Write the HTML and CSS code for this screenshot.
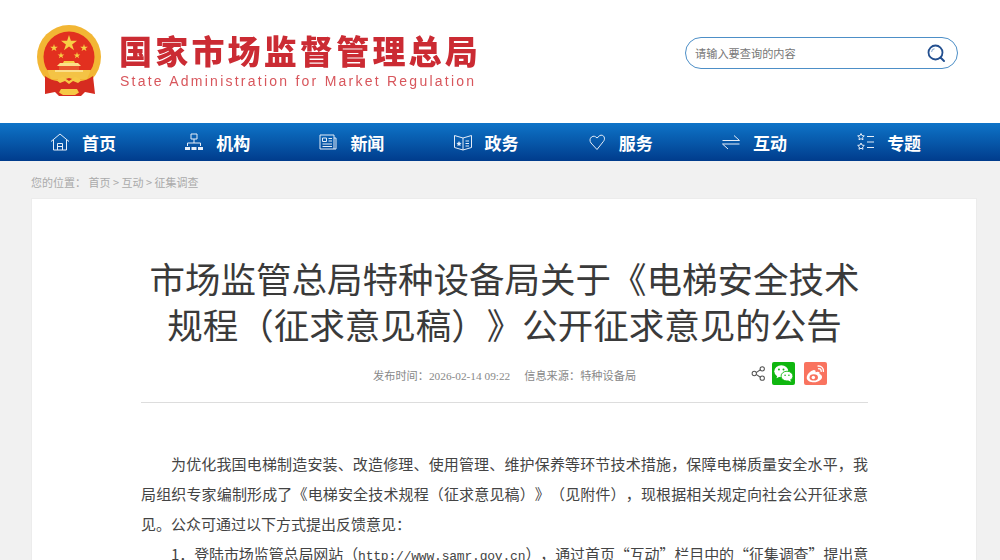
FILE: index.html
```html
<!DOCTYPE html>
<html lang="zh-CN">
<head>
<meta charset="utf-8">
<title>市场监管总局特种设备局关于《电梯安全技术规程（征求意见稿）》公开征求意见的公告</title>
<link rel="stylesheet" href="styles.css">
</head>
<body>
<header class="top">
  <a class="logo">
    <svg class="emblem" viewBox="0 0 70 72" width="70" height="72">
      <circle cx="35" cy="33" r="32" fill="#f2b634"/>
      <circle cx="35" cy="33" r="25.500" fill="#e2301f"/>
      <path d="M13 46h44l-4 9H17z" fill="#f4c345"/>
      <g fill="#f7cf45">
        <path d="M35 11l1.900 5.800h6.100l-4.900 3.600 1.900 5.800-5-3.600-5 3.600 1.900-5.800-4.900-3.600h6.100z"/>
        <path d="M20 20l.9 2.700h2.900l-2.300 1.700.9 2.700-2.400-1.700-2.400 1.700.9-2.700-2.300-1.700h2.900z"/>
        <path d="M50 20l.9 2.700h2.900l-2.300 1.700.9 2.700-2.400-1.700-2.400 1.700.9-2.700-2.300-1.700h2.900z"/>
        <path d="M27 28l.8 2.400h2.500l-2 1.500.8 2.400-2.100-1.500-2.100 1.500.8-2.400-2-1.500h2.500z"/>
        <path d="M43 28l.8 2.400h2.500l-2 1.500.8 2.400-2.100-1.500-2.100 1.500.8-2.400-2-1.500h2.500z"/>
        <path d="M30 37h10l1 2h-12z"/>
      </g>
      <path d="M26 39h18l3 3h-24z" fill="#fbe08a"/>
      <path d="M25 42h20v4H25z" fill="#e8572e"/>
      <path d="M21 46h28v2H21z" fill="#fbe08a"/>
      <path d="M11 52c4 3 9 5 14 5l10-3 10 3c5 0 10-2 14-5l2 18-10-2-4 4H25l-4-4-10 2z" fill="#d62b20"/>
      <path d="M22 56c3-1 5-3 7-3l6 4 6-4c2 0 4 2 7 3l-4 3-5-2-4 3-4-3-5 2z" fill="#f6c846"/>
      <path d="M27 65h16l2 3.500-4 2.500H29l-4-2.500z" fill="#f6c846"/>
    </svg>
    <div class="logo-text">
      <div class="logo-cn">国家市场监督管理总局</div>
      <div class="logo-en">State Administration for Market Regulation</div>
    </div>
  </a>
  <div class="search">
    <span class="search-hint">请输入要查询的内容</span>
    <svg class="search-icon" viewBox="0 0 20 20" width="20" height="20">
      <circle cx="9.500" cy="9.500" r="7" fill="none" stroke="#234f8f" stroke-width="1.800"/>
      <path d="M5.500 9a4 4 0 0 1 3-3.300" fill="none" stroke="#9cb8d8" stroke-width="1.200"/>
      <path d="M14.500 14.500l3.500 3.500" stroke="#234f8f" stroke-width="2" stroke-linecap="round"/>
    </svg>
  </div>
</header>

<nav class="nav">
  <a class="nav-item">
    <svg class="nav-icon" viewBox="0 0 20 20"><path d="M1 9.500 10 2l9 7.500M3.500 8v10h13V8M7.500 18v-6.500h5V18M7.500 14.500h5"/></svg>
    <span>首页</span>
  </a>
  <a class="nav-item">
    <svg class="nav-icon" viewBox="0 0 20 20"><path d="M7 2h6v5H7zM10 7v4M3.500 14v-3h13v3"/><path class="solid" d="M1 15h5v3H1zM7.500 15h5v3h-5zM14 15h5v3h-5z"/></svg>
    <span>机构</span>
  </a>
  <a class="nav-item">
    <svg class="nav-icon" viewBox="0 0 20 20"><path d="M2 3h14v14H2zM16 6h2v11h-2M4.500 6h4v3.500h-4zM10.500 6.500h3.500M10.500 9h3.500M4.500 12h9.500M4.500 14.500h9.500"/></svg>
    <span>新闻</span>
  </a>
  <a class="nav-item">
    <svg class="nav-icon" viewBox="0 0 20 20"><path d="M1.500 3.500 10 6l8.500-2.500v12L10 18l-8.500-2.500zM10 6v12M12.500 9h3.500M12.500 11.500h3.500M12.500 14h3.500"/><path class="solid" d="m6 9 .8 1.700 1.800.2-1.300 1.300.3 1.800L6 13.200 4.400 14l.3-1.800-1.300-1.300 1.800-.2z"/></svg>
    <span>政务</span>
  </a>
  <a class="nav-item">
    <svg class="nav-icon" viewBox="0 0 20 20"><path d="M10 17.500 4 11C2.500 9 2.700 6.500 4.500 5c1.800-1.300 3.800-1 5.500 1l2.800-2.500c1.700-.7 3.500-.3 4.300 1.400.7 1.700.4 3.100-.6 4.400z"/></svg>
    <span>服务</span>
  </a>
  <a class="nav-item">
    <svg class="nav-icon" viewBox="0 0 20 20"><path d="M1.500 8.500h17L13 3.500M18.500 12h-17L7 17"/></svg>
    <span>互动</span>
  </a>
  <a class="nav-item">
    <svg class="nav-icon" viewBox="0 0 20 20"><path d="m6 1.500 1 2.100 2.300.3-1.700 1.600.4 2.300-2-1.100-2 1.100.4-2.300-1.700-1.600L5 3.600zM6 11l1 2.100 2.300.3-1.700 1.600.4 2.300-2-1.100-2 1.100.4-2.300-1.700-1.600L5 13.100zM12 4.500h7M12 10h7M12 15.500h7"/></svg>
    <span>专题</span>
  </a>
</nav>

<main class="page">
  <div class="crumbs">您的位置： 首页 &gt; 互动 &gt; 征集调查</div>
  <article class="card">
    <h1 class="title">市场监管总局特种设备局关于《电梯安全技术规程（征求意见稿）》公开征求意见的公告</h1>
    <div class="meta">
      <div class="meta-text">
        <span>发布时间：<span class="latin">2026-02-14 09:22</span></span>
        <span>信息来源：特种设备局</span>
      </div>
      <div class="share">
        <svg class="share-icon" viewBox="0 0 16 16" width="15" height="15">
          <circle cx="3.500" cy="8" r="2.300"/><circle cx="12" cy="3" r="2.300"/><circle cx="12" cy="13" r="2.300"/>
          <path d="M5.500 7 10 4M5.500 9l4.500 3"/>
        </svg>
        <span class="badge wechat">
          <svg viewBox="0 0 24 24" width="21" height="21">
            <ellipse cx="9.500" cy="9.500" rx="8" ry="6.800" fill="#fff"/>
            <path d="m5 14-1 3.500 4-2z" fill="#fff"/>
            <ellipse cx="16" cy="15" rx="6.800" ry="5.600" fill="#fff" stroke="#0fb60f"/>
            <path d="m19.500 19 1.500 2.500-4-1.500z" fill="#fff"/>
            <circle cx="6.800" cy="7.500" r="1.100" fill="#0fb60f"/><circle cx="12" cy="7.500" r="1.100" fill="#0fb60f"/>
            <circle cx="13.800" cy="14" r=".9" fill="#0fb60f"/><circle cx="18.200" cy="14" r=".9" fill="#0fb60f"/>
          </svg>
        </span>
        <span class="badge weibo">
          <svg viewBox="0 0 24 24" width="21" height="21">
            <path d="M10 8c-4 1-8 5-8 9 0 3 4 5 8.500 5s9-3 9-6c0-2-2-3-3-3.300.7-2-.5-3-3-2.500l-1.500.5c.5-2-.5-3-2.500-2.700z" fill="#fff"/>
            <ellipse cx="10" cy="16.500" rx="4.800" ry="3.600" fill="#f9735f"/>
            <circle cx="9.500" cy="16.500" r="2" fill="#fff"/>
            <path d="M15 3.500c3.500-.5 6.500 2.500 6 6M15.500 6.500c1.800-.2 3.200 1.200 3 3" fill="none" stroke="#fff" stroke-width="1.600" stroke-linecap="round"/>
          </svg>
        </span>
      </div>
    </div>
    <div class="body">
      <p>为优化我国电梯制造安装、改造修理、使用管理、维护保养等环节技术措施，保障电梯质量安全水平，我局组织专家编制形成了《电梯安全技术规程（征求意见稿）》（见附件），现根据相关规定向社会公开征求意见。公众可通过以下方式提出反馈意见：</p>
      <p class="item">1．登陆市场监管总局网站（<span class="url">http://www.samr.gov.cn</span>），通过首页“互动”栏目中的“征集调查”提出意见。</p>
    </div>
  </article>
</main>
</body>
</html>
```
FILE: styles.css
```css
* { box-sizing: border-box; }
html, body { margin: 0; height: 560px; overflow: hidden; }
body {
  background: #f1f1f1;
  font-family: "Noto Sans CJK SC", "Liberation Sans", sans-serif;
  color: #333;
  text-spacing-trim: space-all;
}
.top {
  height: 123px;
  background: #fff;
  display: flex;
  justify-content: space-between;
  align-items: flex-start;
  padding: 24px 42px 0 34px;
}
.logo { display: flex; align-items: flex-start; gap: 15px; filter: blur(.35px); }
.emblem { display: block; flex: none; }
.logo-text { padding-top: 5px; }
.logo-cn {
  font-size: 33px;
  line-height: 43px;
  font-weight: 900;
  letter-spacing: 3.200px;
  white-space: nowrap;
  color: #cb2b33;
}
.logo-en {
  font-family: "Liberation Sans", sans-serif;
  font-size: 14px;
  line-height: 18px;
  letter-spacing: 2.240px;
  padding-left: 1px;
  white-space: nowrap;
  color: #d8565c;
}
.search {
  width: 273px;
  height: 32px;
  margin-top: 13px;
  border: 1.500px solid #4d8fc7;
  border-radius: 16px;
  display: flex;
  align-items: center;
  justify-content: space-between;
  padding: 0 11px 0 9px;
}
.search-hint { font-size: 11.200px; color: #777; }
.search-icon { display: block; }
.nav {
  height: 38px;
  background: linear-gradient(#0e74c8, #003c8c);
  display: flex;
  padding-left: 50px;
}
.nav-item {
  width: 134.200px;
  display: flex;
  align-items: center;
  gap: 12px;
  color: #fff;
  font-size: 17px;
  font-weight: 700;
}
.nav-icon {
  width: 20px;
  height: 20px;
  flex: none;
  fill: none;
  stroke: #e6eef8;
  stroke-width: 1;
}
.nav-icon .solid { fill: #e6eef8; stroke: none; }
.page { padding: 0 23px 0 31px; }
.crumbs {
  height: 37px;
  line-height: 43px;
  font-size: 11px;
  color: #aaa;
  white-space: nowrap;
}
.card {
  background: #fff;
  border: 1px solid #ececec;
  padding: 56px 108px 40px 109px;
}
.title {
  margin: 0;
  font-size: 35.500px;
  line-height: 46px;
  font-weight: 400;
  text-align: center;
  color: #3a3a3a;
}
.meta {
  margin-top: 11px;
  height: 44px;
  border-bottom: 1px solid #ddd;
  display: flex;
  align-items: flex-start;
  padding-left: 232px;
  box-sizing: content-box;
}
.meta-text {
  width: 379px;
  display: flex;
  gap: 14px;
  font-size: 11.200px;
  line-height: 16px;
  padding-top: 9px;
  color: #888;
}
.latin { font-family: "Liberation Serif", serif; font-size: 11.300px; }
.share { display: flex; align-items: center; gap: 5px; padding-top: 4px; margin-left: -1px; }
.share-icon { fill: none; stroke: #555; stroke-width: 1.100; display: block; margin-right: 1px; }
.badge {
  width: 23px;
  height: 23px;
  border-radius: 2px;
  display: flex;
  align-items: center;
  justify-content: center;
}
.wechat { background: #0fb60f; }
.weibo { background: #f9735f; margin-left: 4px; }
.body { padding-top: 46px; font-size: 15px; line-height: 30px; color: #444; }
.body p { margin: 0; text-indent: 2em; text-align: justify; }
.body .item { letter-spacing: -.2px; }
.url { font-family: "Liberation Mono", monospace; font-size: 13px; }
```
